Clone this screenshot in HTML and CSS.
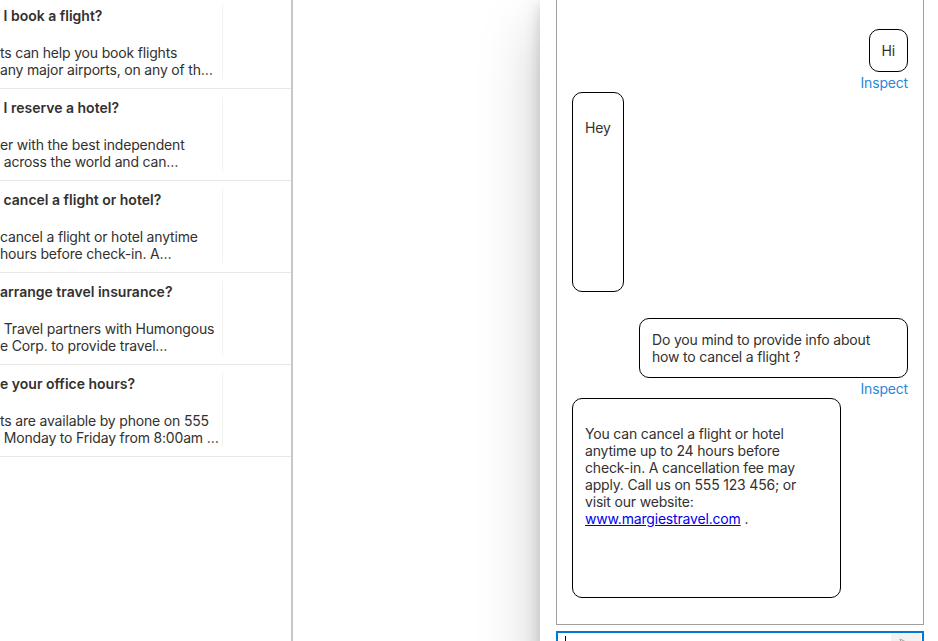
FILE: index.html
```html
<!DOCTYPE html>
<html>
<head>
<meta charset="utf-8">
<link rel="stylesheet" href="styles.css">
</head>
<body>
<div class="faq">
  <div class="faq-list">
    <div class="faq-item"><div class="faq-main">
      <div class="faq-title"> I book a flight?</div>
      <div class="faq-body"><div class="faq-line">ts can help you book flights</div><div class="faq-line">any major airports, on any of th…</div></div>
    </div></div>
    <div class="faq-item"><div class="faq-main">
      <div class="faq-title"> I reserve a hotel?</div>
      <div class="faq-body"><div class="faq-line">er with the best independent</div><div class="faq-line"> across the world and can…</div></div>
    </div></div>
    <div class="faq-item"><div class="faq-main">
      <div class="faq-title"> cancel a flight or hotel?</div>
      <div class="faq-body"><div class="faq-line">cancel a flight or hotel anytime</div><div class="faq-line">hours before check-in. A…</div></div>
    </div></div>
    <div class="faq-item"><div class="faq-main">
      <div class="faq-title">arrange travel insurance?</div>
      <div class="faq-body"><div class="faq-line"> Travel partners with Humongous</div><div class="faq-line">e Corp. to provide travel…</div></div>
    </div></div>
    <div class="faq-item"><div class="faq-main">
      <div class="faq-title">e your office hours?</div>
      <div class="faq-body"><div class="faq-line">ts are available by phone on 555</div><div class="faq-line"> Monday to Friday from 8:00am …</div></div>
    </div></div>
  </div>
</div>
<div class="middle"></div>
<div class="panel">
  <div class="chat">
    <div class="bubble user">Hi</div>
    <div class="inspect">Inspect</div>
    <div class="bubble bot">Hey</div>
    <div class="bubble user">Do you mind to provide info about how to cancel a flight ?</div>
    <div class="inspect">Inspect</div>
    <div class="bubble bot wide">You can cancel a flight or hotel anytime up to 24 hours before check-in. A cancellation fee may apply. Call us on 555 123 456; or visit our website: <span class="nowrap"><a href="#" class="link">www.margiestravel.com</a> .</span></div>
  </div>
  <div class="input">
    <div class="caret"></div>
    <div class="send">
      <svg class="send-icon" width="16" height="16" viewBox="0 0 16 16"><path d="M2 2 L14 8 L2 14 L4 8 Z M4 8 H10" fill="none" stroke="#a19f9d" stroke-width="1"/></svg>
    </div>
  </div>
</div>
</body>
</html>
```
FILE: styles.css
```css
html, body {
  margin: 0;
  height: 641px;
  overflow: hidden;
}
body {
  display: flex;
  font-family: Inter, "Noto Sans", sans-serif;
  font-size: 14px;
  line-height: 17px;
  letter-spacing: -0.18px;
  color: #323130;
  background: #fff;
}
.faq {
  width: 291px;
  flex-shrink: 0;
  border-right: 2px solid #c8c8c8;
  height: 641px;
  overflow: hidden;
}
.faq-list {
  margin-top: -3px;
}
.faq-item {
  padding: 8px 0 9px;
  border-bottom: 1px solid #e9e8e7;
}
.faq-main {
  width: 222px;
  border-right: 1px solid #f3f2f1;
  padding: 2px 0 1px;
}
.faq-title {
  font-weight: 600;
  letter-spacing: 0;
  white-space: pre;
  overflow: hidden;
}
.faq-body {
  margin-top: 20px;
}
.faq-line {
  white-space: pre;
  overflow: hidden;
}
.middle {
  flex: 1;
}
.panel {
  width: 398px;
  height: 672px;
  flex-shrink: 0;
  box-sizing: border-box;
  padding: 0 14px 0 16px;
  display: flex;
  flex-direction: column;
  background: #fff;
  box-shadow: 0 25.6px 57.6px rgba(0, 0, 0, 0.22), 0 4.8px 14.4px rgba(0, 0, 0, 0.18);
  position: relative;
  z-index: 1;
}
.chat {
  flex: 1;
  min-height: 0;
  border: 1px solid #a0a0a0;
  border-top: 0;
  padding: 0 15px;
  display: flex;
  flex-direction: column;
  justify-content: flex-end;
  overflow: hidden;
}
.bubble {
  border: 1px solid #000;
  border-radius: 10px;
  padding: 12px;
  max-width: 269px;
  box-sizing: border-box;
  flex-shrink: 0;
}
.user {
  align-self: flex-end;
}
.bot {
  align-self: flex-start;
  min-height: 200px;
  padding-top: 26px;
  margin-bottom: 26px;
}
.wide {
  width: 269px;
  padding-right: 18px;
}
.nowrap {
  white-space: nowrap;
}
.inspect {
  align-self: flex-end;
  color: #2b88d8;
  margin: 2px 0 1px;
  flex-shrink: 0;
}
.link {
  color: #0000ee;
  text-decoration: underline;
}
.input {
  height: 41px;
  margin-top: 6px;
  flex-shrink: 0;
  box-sizing: border-box;
  border: 2px solid #0078d4;
  display: flex;
}
.caret {
  width: 1px;
  height: 20px;
  background: #000;
  margin: 3px 0 0 7px;
}
.send {
  margin-left: auto;
  margin-right: 1px;
  width: 30px;
  background: #f3f2f1;
  display: flex;
  justify-content: center;
  padding-top: 4px;
}
.send-icon {
  display: block;
}
```
